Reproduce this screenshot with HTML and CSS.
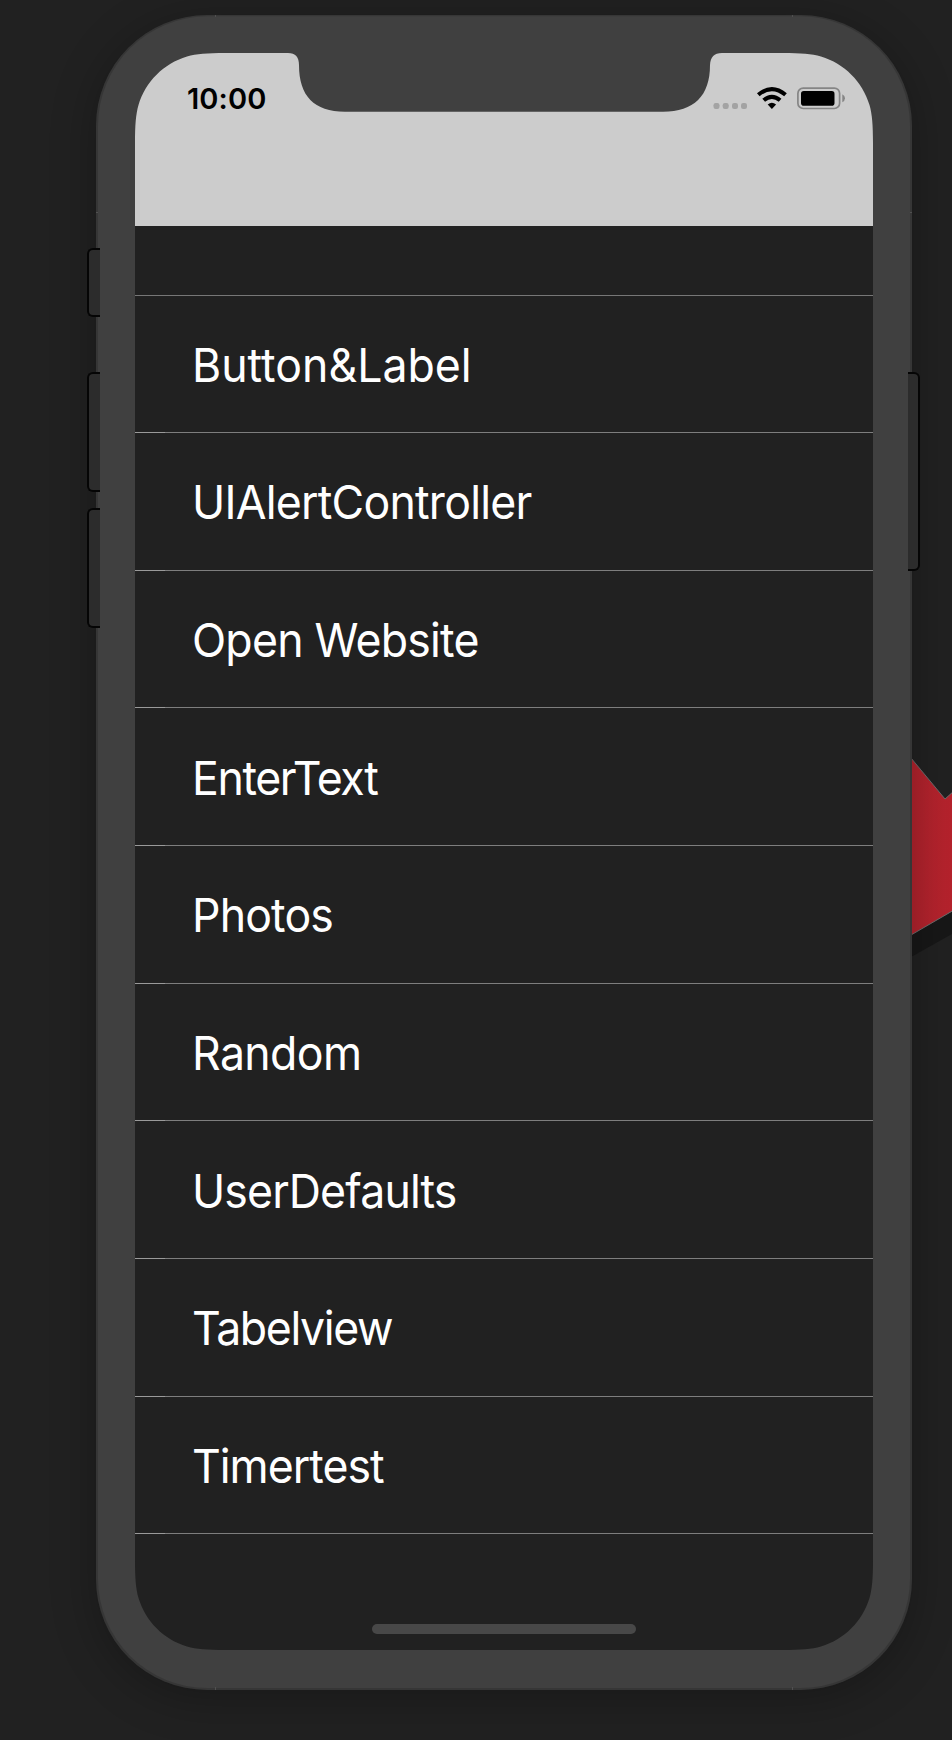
FILE: index.html
```html
<!DOCTYPE html>
<html lang="en">
<head>
<meta charset="utf-8">
<title>Simulator</title>
<link rel="stylesheet" href="styles.css">
</head>
<body>
<main class="desktop">
  <svg class="arrow" width="41" height="210" viewBox="911 752 41 210" aria-hidden="true">
    <defs><linearGradient id="red"><stop offset="0" stop-color="#b1232d"/><stop offset="1" stop-color="#b5222c"/></linearGradient></defs>
    <path d="M911 930L952 908V934L911 957Z" fill="#171717"/>
    <path d="M911 758L945 799L954 791V910L911 935Z" fill="url(#red)" stroke="#6b6b6b" stroke-width="1"/>
  </svg>
  <div class="phone">
    <svg class="shell" width="816" height="1675" viewBox="96 15 816 1675" aria-hidden="true">
      <rect x="96" y="15" width="816" height="1675" rx="111" fill="#363636"/>
      <rect x="98" y="16.300" width="812" height="1671.700" rx="109.500" fill="#404040"/>
      <path d="M215.500 15V17M792.500 15V17M215.500 1687V1690M792.500 1687V1690M96 212.500H98M910 212.500H912" stroke="#505050"/>
    </svg>
    <span class="key mute"></span>
    <span class="key up"></span>
    <span class="key down"></span>
    <span class="key power"></span>
    <div class="screen">
      <header class="status">
        <span class="time">10:00</span>
        <svg class="indicators" width="134" height="24" viewBox="712 86 134 24" aria-hidden="true">
          <g fill="#a3a3a3"><rect x="713.500" y="103" width="6" height="6" rx="2.200"/><rect x="722.700" y="103" width="6" height="6" rx="2.200"/><rect x="732" y="103" width="6" height="6" rx="2.200"/><rect x="741" y="103" width="6" height="6" rx="2.200"/></g>
          <g fill="none" stroke="#000" stroke-width="4.100"><path d="M758.300 94.800Q771.900 83.400 785.500 94.800"/><path d="M763.700 100.300Q771.900 93.300 780.100 100.300"/></g>
          <path d="M767.700 104.500Q771.900 100.800 776.100 104.500L771.900 108.900Z"/>
          <rect x="797.900" y="88.100" width="41.700" height="20.400" rx="5.300" fill="none" stroke="#858585" stroke-width="1.700"/>
          <rect x="801" y="91" width="33.500" height="14.700" rx="2.800"/>
          <path d="M842.300 94.200Q845 95.700 845 98.200T842.300 102.200Z" fill="#858585"/>
        </svg>
      </header>
      <ul class="list">
        <li class="row"><span class="label button-label">Button&amp;Label</span></li>
        <li class="row"><span class="label alert">UIAlertController</span></li>
        <li class="row"><span class="label website">Open Website</span></li>
        <li class="row"><span class="label enter">EnterText</span></li>
        <li class="row"><span class="label photos">Photos</span></li>
        <li class="row"><span class="label random">Random</span></li>
        <li class="row"><span class="label defaults">UserDefaults</span></li>
        <li class="row"><span class="label table">Tabelview</span></li>
        <li class="row"><span class="label timer">Timertest</span></li>
      </ul>
      <div class="home"></div>
    </div>
    <svg class="bezel" width="738" height="1597" viewBox="135 53 738 1597" aria-hidden="true">
      <defs><path id="corner" d="M134 52H225V53C207 53 196.500 53.800 187 56.500C163.600 63.600 145.600 81.600 138.500 105C135.800 114.500 135 125 135 143H134Z"/></defs>
      <g fill="#404040">
        <use href="#corner"/>
        <use href="#corner" transform="matrix(-1 0 0 1 1008 0)"/>
        <use href="#corner" transform="matrix(1 0 0 -1 0 1703)"/>
        <use href="#corner" transform="matrix(-1 0 0 -1 1008 1703)"/>
        <path d="M288 52V53C295.500 53 299 57 299 65C299 96 314 111.700 345 111.700H663C694 111.700 710 96 710 65C710.500 57 714 53 722 53V52Z"/>
      </g>
    </svg>
  </div>
</main>
</body>
</html>
```
FILE: styles.css
```css
* { box-sizing: border-box; }
body { margin: 0; background: #212121; font-family: Inter, "Liberation Sans", sans-serif; }
.desktop { position: relative; width: 952px; height: 1740px; padding: 15px 40px 50px 96px; overflow: hidden; }
.arrow { position: absolute; left: 911px; top: 752px; }
.phone { position: relative; width: 816px; height: 1675px; padding: 38px 39px 40px; border-radius: 111px; box-shadow: 0 8px 45px rgba(0, 0, 0, 0.27); }
.shell { position: absolute; left: 0; top: 0; }
.key { position: absolute; left: -9px; width: 13px; background: #2c2c2c; border: 2px solid #050505; border-right: 0; border-radius: 6px 0 0 6px; }
.mute { top: 233px; height: 69px; }
.up { top: 357px; height: 120px; }
.down { top: 493px; height: 120px; }
.power { left: 812px; top: 357px; width: 12px; height: 199px; border-right: 2px solid #050505; border-left: 0; border-radius: 0 6px 6px 0; }
.screen { position: relative; width: 738px; height: 1597px; background: #212121; display: flex; flex-direction: column; }
.status { height: 173px; flex: none; background: #ccc; display: flex; justify-content: space-between; align-items: flex-start; padding: 33px 27px 0 52px; }
.time { font-size: 29px; line-height: 26px; font-weight: 600; letter-spacing: 0.1px; color: #000; }
.indicators { display: block; }
.list { list-style: none; margin: 68.5px 0 0; padding: 0; border-top: 1px solid #777; }
.row { height: 137.640px; display: flex; align-items: center; padding: 1px 0 0 56.6px; background: linear-gradient(#9a9a9a, #9a9a9a) left bottom / 30px 1px no-repeat, linear-gradient(#7e7e7e, #7e7e7e) left bottom / 100% 1px no-repeat; }
.label { color: #fff; font-size: 46.500px; line-height: 56px; white-space: nowrap; transform: scaleX(0.96); transform-origin: left center; }
.button-label { letter-spacing: 0; }
.alert { letter-spacing: -0.8px; }
.website { letter-spacing: -0.82px; }
.enter { letter-spacing: -1.45px; }
.photos { letter-spacing: -0.9px; }
.random { letter-spacing: -0.65px; }
.defaults { letter-spacing: -0.92px; }
.table { letter-spacing: -1.45px; }
.timer { letter-spacing: -1.05px; }
.home { width: 264px; height: 10px; margin: auto auto 16px; border-radius: 5px; background: #484848; }
.bezel { position: absolute; left: 39px; top: 38px; }
```
